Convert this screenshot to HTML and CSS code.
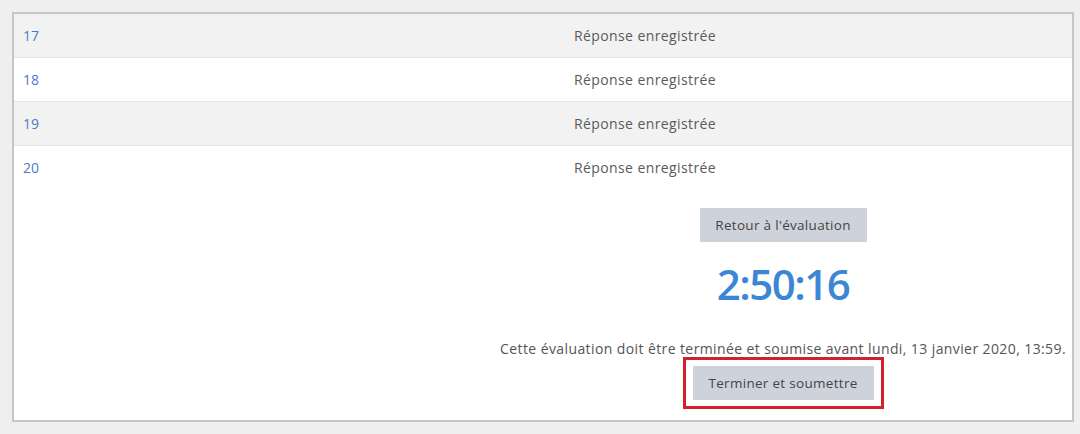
FILE: index.html
```html
<!DOCTYPE html>
<html lang="fr">
<head>
<meta charset="utf-8">
<title>Résumé de la tentative</title>
<link rel="stylesheet" href="styles.css">
</head>
<body>
<div class="page">
  <div class="panel">
    <div class="table">
      <div class="row odd"><a class="num" href="#">17</a><span class="status">Réponse enregistrée</span></div>
      <div class="row"><a class="num" href="#">18</a><span class="status">Réponse enregistrée</span></div>
      <div class="row odd"><a class="num" href="#">19</a><span class="status">Réponse enregistrée</span></div>
      <div class="row last"><a class="num" href="#">20</a><span class="status">Réponse enregistrée</span></div>
    </div>
    <div class="actions">
      <div class="actions-inner">
        <button class="btn btn-back">Retour à l'évaluation</button>
        <div class="timer">2:50:16</div>
        <p class="deadline">Cette évaluation doit être terminée et soumise avant lundi, 13 janvier 2020, 13:59.</p>
        <div class="highlight"><button class="btn btn-submit">Terminer et soumettre</button></div>
      </div>
    </div>
  </div>
</div>
</body>
</html>
```
FILE: styles.css
```css
html, body {
  margin: 0;
  padding: 0;
  background: #efefef;
}
body {
  font-family: "Open Sans", "Liberation Sans", sans-serif;
  font-size: 14px;
  letter-spacing: 0.4px;
  color: #555;
}
.page {
  padding: 12px 6px 12px 12px;
}
.panel {
  background: #fff;
  border: 2px solid #c6c6c6;
  height: 410px;
  box-sizing: border-box;
}
.row {
  display: grid;
  grid-template-columns: 204px 1fr;
  height: 43px;
  align-items: center;
  border-bottom: 1px solid #e4e4e4;
  background: #fff;
}
.row.odd { background: #f2f2f2; }
.row.last { border-bottom: none; }
.num {
  padding-left: 9px;
  color: #4a7cc9;
  text-decoration: none;
  letter-spacing: 0;
}
.status {
  text-align: center;
  color: #5a5a5a;
}
.actions {
  display: flex;
  justify-content: flex-end;
  padding: 19px 6px 0 0;
}
.actions-inner {
  display: flex;
  flex-direction: column;
  align-items: center;
}
.btn {
  font-family: inherit;
  font-size: 13.5px;
  letter-spacing: 0.3px;
  color: #444;
  background: #ced3db;
  border: none;
  border-radius: 0;
}
.btn-back {
  width: 167px;
  height: 34px;
}
.timer {
  margin-top: 16px;
  font-size: 42px;
  font-weight: 600;
  letter-spacing: -1.5px;
  color: #3b87d5;
  line-height: 52px;
}
.deadline {
  margin: 30px 0 0 0;
  line-height: 17px;
  color: #555;
}
.highlight {
  margin-top: 0;
  border: 3px solid #d3202d;
  padding: 6px 7px;
}
.btn-submit {
  display: block;
  width: 181px;
  height: 34px;
}
```
